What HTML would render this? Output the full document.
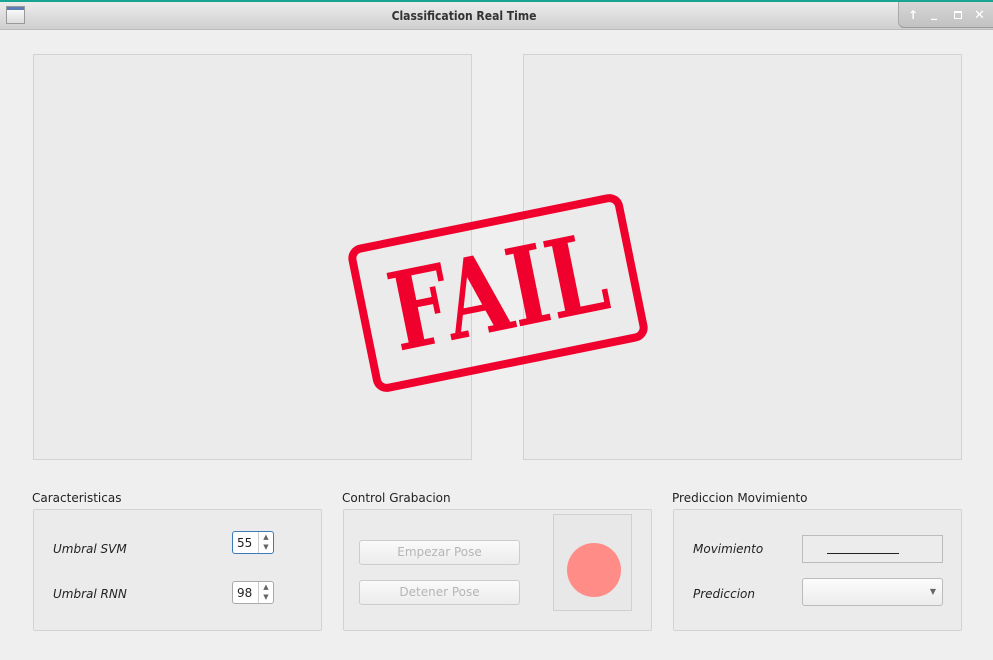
<!DOCTYPE html>
<html><head><style>
body{margin:0;width:993px;height:660px;background:#efefef;font-family:"DejaVu Sans","Liberation Sans",sans-serif;font-size:12px;color:#222;position:relative;overflow:hidden}
.a{position:absolute;box-sizing:border-box}
.title{left:0;top:0;width:993px;height:30px;background:linear-gradient(#ececec,#cfcfcf);border-top:2px solid #1aa593;border-bottom:1px solid #bbb}
.panel{background:#ebebeb;border:1px solid #d3d3d3}
.grp{background:#ebebeb;border:1px solid #d3d3d3;border-radius:2px}
.lbl{font-size:12px}
.it{font-style:italic;font-size:12px}
.spin{background:#fff;border:1px solid #aaa;border-radius:3px;width:42px;height:23px}
.btn{border:1px solid #ccc;border-radius:3px;background:linear-gradient(#fafafa,#ececec);color:#b5b5b5;text-align:center;font-size:12px;line-height:22px}
.tb{position:absolute;top:6px;color:#fff;font-size:12px;font-weight:bold}
</style></head><body>
<div class="a title"></div>
<div class="a" style="left:6px;top:6px;width:19px;height:18px;border:1px solid #999;background:linear-gradient(#fff,#ddd)"><div style="height:3px;background:#5b7fb5"></div></div>
<div class="a" style="left:0;top:9px;width:928px;text-align:center;font-weight:bold;font-size:12px;color:#333;font-family:'DejaVu Sans Condensed','DejaVu Sans',sans-serif">Classification Real Time</div>
<div class="a" style="left:898px;top:2px;width:95px;height:26px;background:linear-gradient(#d6d6d6,#c2c2c2);border-bottom-left-radius:6px;border-left:1px solid #aaa;border-bottom:1px solid #999">
<span class="tb" style="left:9px">↑</span><span class="tb" style="left:32px;top:4px">_</span>
<span class="a" style="left:55px;top:9px;width:8px;height:8px;border:1px solid #fff;border-top-width:2px"></span>
<span class="tb" style="left:75px;font-size:13px;font-weight:normal">✕</span></div>

<div class="a panel" style="left:33px;top:54px;width:439px;height:406px"></div>
<div class="a panel" style="left:523px;top:54px;width:439px;height:406px"></div>

<div class="a" style="left:358px;top:218px;width:280px;height:150px;transform:rotate(-11.5deg);border:8px solid #f0002c;border-radius:14px"></div>
<div class="a" style="left:338px;top:223px;width:320px;height:140px;transform:rotate(-11.5deg);text-align:center;font-family:'DejaVu Serif',serif;font-weight:bold;font-size:108px;color:#f0002c;line-height:140px"><span style="display:inline-block;transform:scaleX(0.78)">FAIL</span></div>

<div class="a lbl" style="left:32px;top:491px">Caracteristicas</div>
<div class="a grp" style="left:33px;top:509px;width:289px;height:122px"></div>
<div class="a it" style="left:53px;top:542px">Umbral SVM</div>
<div class="a it" style="left:53px;top:587px">Umbral RNN</div>
<div class="a spin" style="left:232px;top:531px;border:1px solid #3a7bb8"><span style="position:absolute;left:4px;top:4px">55</span><span style="position:absolute;right:0;top:0;width:14px;height:21px;border-left:1px solid #ccc;font-size:7px;color:#666;text-align:center;line-height:10px">▲<br>▼</span></div>
<div class="a spin" style="left:232px;top:581px"><span style="position:absolute;left:4px;top:4px">98</span><span style="position:absolute;right:0;top:0;width:14px;height:21px;border-left:1px solid #ccc;font-size:7px;color:#666;text-align:center;line-height:10px">▲<br>▼</span></div>

<div class="a lbl" style="left:342px;top:491px">Control Grabacion</div>
<div class="a grp" style="left:343px;top:509px;width:309px;height:122px"></div>
<div class="a btn" style="left:359px;top:540px;width:161px;height:25px">Empezar Pose</div>
<div class="a btn" style="left:359px;top:580px;width:161px;height:25px">Detener Pose</div>
<div class="a" style="left:553px;top:514px;width:79px;height:97px;border:1px solid #d0d0d0;background:#e8e8e8"></div>
<div class="a" style="left:567px;top:543px;width:54px;height:54px;border-radius:50%;background:#ff8c86"></div>

<div class="a lbl" style="left:672px;top:491px">Prediccion Movimiento</div>
<div class="a grp" style="left:673px;top:509px;width:289px;height:122px"></div>
<div class="a it" style="left:693px;top:542px">Movimiento</div>
<div class="a it" style="left:693px;top:587px">Prediccion</div>
<div class="a" style="left:802px;top:535px;width:141px;height:28px;border:1px solid #bbb;background:#ececec"><div style="position:absolute;left:24px;top:17px;width:72px;height:1px;background:#222"></div></div>
<div class="a" style="left:802px;top:578px;width:141px;height:28px;border:1px solid #bbb;border-radius:3px;background:linear-gradient(#fcfcfc,#ececec)"><span style="position:absolute;right:6px;top:8px;font-size:8px;color:#666">▼</span></div>
</body></html>
